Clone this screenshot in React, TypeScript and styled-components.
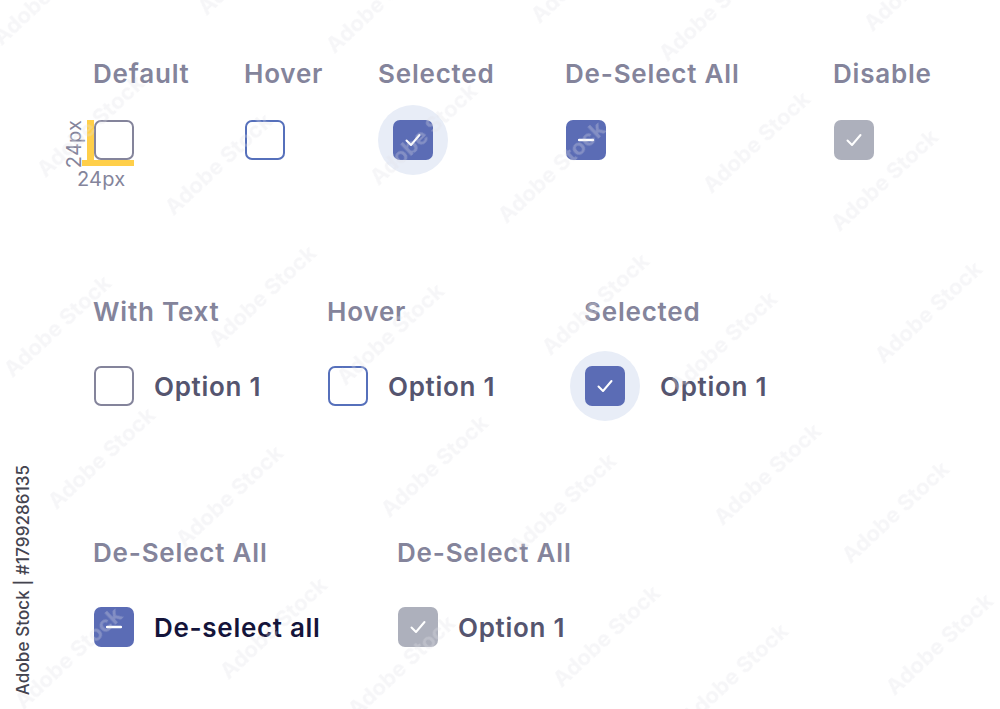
import React from 'react';
import styled, { createGlobalStyle } from 'styled-components';

const GlobalStyle = createGlobalStyle`
  html, body {
    margin: 0;
    padding: 0;
    background: #fff;
  }
`;

const Page = styled.div`
  position: relative;
  width: 1000px;
  height: 709px;
  overflow: hidden;
  box-sizing: border-box;
  padding: 59px 0 0 94px;
  font-family: Inter, 'Liberation Sans', sans-serif;
`;

const Section = styled.section<{ $bottom: number }>`
  display: flex;
  margin-bottom: ${(p) => p.$bottom}px;
`;

const Column = styled.div<{ $width: number; $gap: number }>`
  display: flex;
  flex-direction: column;
  align-items: flex-start;
  gap: ${(p) => p.$gap}px;
  width: ${(p) => p.$width}px;
  flex-shrink: 0;
`;

const Title = styled.div<{ $inset?: number }>`
  height: 30px;
  line-height: 30px;
  margin-left: ${(p) => p.$inset ?? -1}px;
  font-size: 26px;
  font-weight: 600;
  letter-spacing: 0.8px;
  color: #84849b;
  white-space: nowrap;
`;

const Option = styled.div`
  display: flex;
  align-items: center;
  height: 40px;
  gap: 20px;
`;

const Box = styled.div<{ $kind: 'default' | 'hover' | 'checked' | 'minus' | 'disabled' }>`
  position: relative;
  display: flex;
  align-items: center;
  justify-content: center;
  box-sizing: border-box;
  width: 40px;
  height: 40px;
  flex-shrink: 0;
  border-radius: 7px;
  border: ${(p) =>
    p.$kind === 'default' ? '2px solid #84849b' : p.$kind === 'hover' ? '2px solid #5670bb' : 'none'};
  background: ${(p) =>
    p.$kind === 'checked' || p.$kind === 'minus' ? '#5b6cb5' : p.$kind === 'disabled' ? '#adb0bc' : 'transparent'};
`;

const Halo = styled.div<{ $shift: number }>`
  display: flex;
  align-items: center;
  justify-content: center;
  width: 70px;
  height: 70px;
  margin: -15px 0 -15px ${(p) => p.$shift}px;
  border-radius: 50%;
  background: #e8edf7;
`;

const OptionText = styled.span<{ $dark?: boolean }>`
  font-size: 26px;
  font-weight: 600;
  letter-spacing: 0.7px;
  color: ${(p) => (p.$dark ? '#14143a' : '#55556f')};
  white-space: nowrap;
`;

const SpecBarV = styled.div`
  position: absolute;
  left: -9px;
  top: -2px;
  width: 7px;
  height: 46px;
  background: #ffcf4a;
`;

const SpecBarH = styled.div`
  position: absolute;
  left: -14px;
  top: 38px;
  width: 52px;
  height: 6px;
  background: #ffcf4a;
`;

const SpecBelow = styled.span`
  position: absolute;
  left: -19px;
  top: 45px;
  font-size: 20px;
  letter-spacing: 0.2px;
  line-height: 24px;
  color: #84849b;
`;

const SpecSide = styled.span`
  position: absolute;
  left: -46px;
  top: 10px;
  font-size: 20px;
  letter-spacing: 0.2px;
  line-height: 24px;
  color: #84849b;
  transform: rotate(-90deg);
`;

const StockId = styled.div`
  position: absolute;
  left: 23px;
  top: 580px;
  transform: translate(-50%, -50%) rotate(-90deg);
  font-size: 17px;
  font-weight: 500;
  letter-spacing: 0.1px;
  color: #44444f;
  white-space: nowrap;
`;

const WatermarkText = styled.span`
  position: absolute;
  transform-origin: 0 100%;
  transform: rotate(-43deg);
  font-size: 22px;
  line-height: 26px;
  font-weight: 700;
  color: rgba(226, 226, 232, 0.3);
  filter: blur(0.7px);
  white-space: nowrap;
  pointer-events: none;
`;

// watermark repeats on two offset lattices
const marks: { x: number; y: number }[] = [];
[
  [5, 50],
  [210, 20],
].forEach(([ox, oy]) => {
  for (let i = -3; i < 6; i++) {
    for (let j = -1; j < 6; j++) {
      const x = ox + i * 333 + j * 172;
      const y = oy + i * 8 + j * 170;
      if (x > -140 && x < 1000 && y > -10 && y < 840) marks.push({ x, y });
    }
  }
});

const Check = () => (
  <svg width="16" height="14" viewBox="0 0 16 14" fill="none">
    <path d="M1.5 7.5 L6 12 L14.5 2" stroke="#fff" strokeWidth="2" strokeLinecap="round" strokeLinejoin="round" />
  </svg>
);

const Minus = () => (
  <svg width="16" height="4" viewBox="0 0 16 4" fill="none">
    <path d="M1 2 H15" stroke="#fff" strokeWidth="2.4" strokeLinecap="round" />
  </svg>
);

const App: React.FC = () => (
  <Page>
    <GlobalStyle />
    <Section $bottom={137}>
      <Column $width={151} $gap={31}>
        <Title>Default</Title>
        <Option>
          <Box $kind="default">
            <SpecBarV />
            <SpecBarH />
            <SpecSide>24px</SpecSide>
            <SpecBelow>24px</SpecBelow>
          </Box>
        </Option>
      </Column>
      <Column $width={133} $gap={31}>
        <Title>Hover</Title>
        <Option>
          <Box $kind="hover" />
        </Option>
      </Column>
      <Column $width={188} $gap={31}>
        <Title $inset={0}>Selected</Title>
        <Option>
          <Halo $shift={0}>
            <Box $kind="checked"><Check /></Box>
          </Halo>
        </Option>
      </Column>
      <Column $width={268} $gap={31}>
        <Title>De-Select All</Title>
        <Option>
          <Box $kind="minus"><Minus /></Box>
        </Option>
      </Column>
      <Column $width={120} $gap={31}>
        <Title>Disable</Title>
        <Option>
          <Box $kind="disabled"><Check /></Box>
        </Option>
      </Column>
    </Section>
    <Section $bottom={132}>
      <Column $width={234} $gap={39}>
        <Title>With Text</Title>
        <Option>
          <Box $kind="default" />
          <OptionText>Option 1</OptionText>
        </Option>
      </Column>
      <Column $width={257} $gap={39}>
        <Title>Hover</Title>
        <Option>
          <Box $kind="hover" />
          <OptionText>Option 1</OptionText>
        </Option>
      </Column>
      <Column $width={240} $gap={39}>
        <Title>Selected</Title>
        <Option>
          <Halo $shift={-15}>
            <Box $kind="checked"><Check /></Box>
          </Halo>
          <OptionText>Option 1</OptionText>
        </Option>
      </Column>
    </Section>
    <Section $bottom={0}>
      <Column $width={304} $gap={39}>
        <Title>De-Select All</Title>
        <Option>
          <Box $kind="minus"><Minus /></Box>
          <OptionText $dark>De-select all</OptionText>
        </Option>
      </Column>
      <Column $width={240} $gap={39}>
        <Title>De-Select All</Title>
        <Option>
          <Box $kind="disabled"><Check /></Box>
          <OptionText>Option 1</OptionText>
        </Option>
      </Column>
    </Section>
    {marks.map((m) => (
      <WatermarkText key={`${m.x}-${m.y}`} style={{ left: m.x, top: m.y - 26 }}>
        Adobe Stock
      </WatermarkText>
    ))}
    <StockId>Adobe Stock | #1799286135</StockId>
  </Page>
);

export default App;
